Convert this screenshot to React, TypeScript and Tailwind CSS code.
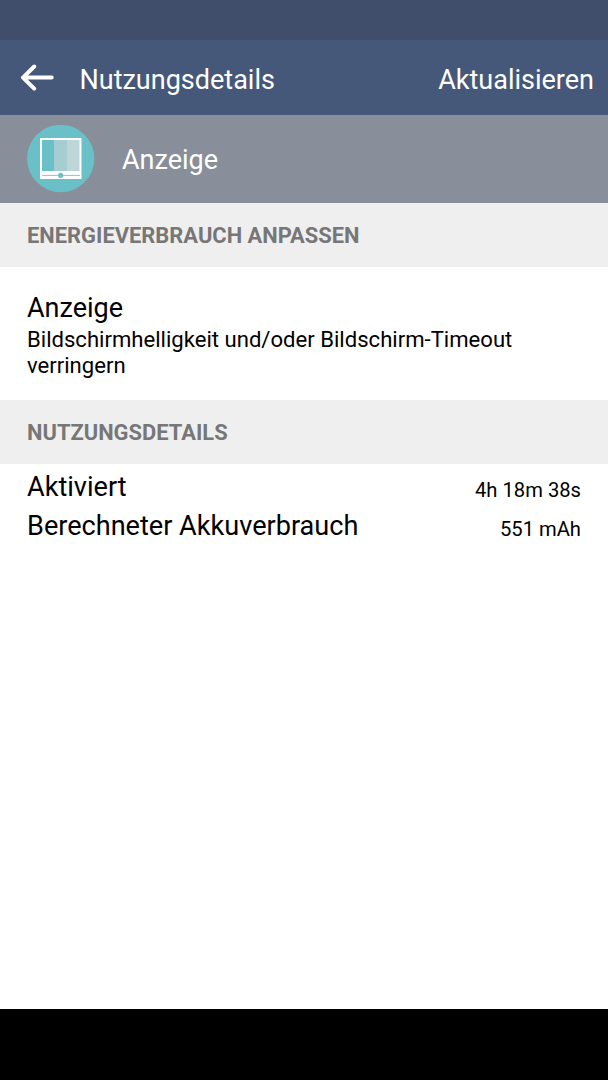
const usage = [
    { label: "Aktiviert", value: "4h 18m 38s" },
    { label: "Berechneter Akkuverbrauch", value: "551 mAh" },
];

function BackIcon() {
    return (
        <svg
            width="34"
            height="28"
            viewBox="0 0 34 28"
            fill="none"
            stroke="white"
            strokeWidth="4"
            strokeLinecap="round"
            strokeLinejoin="round"
        >
            <path d="M14.2 2.5 3 13.6l11.2 11M3 13.6h28.7" />
        </svg>
    );
}

function DisplayIcon() {
    return (
        <svg width="68" height="68" viewBox="0 0 68 68">
            <circle cx="33.7" cy="33.5" r="33.7" fill="#6ac0c7" />
            <rect x="13" y="13" width="41.5" height="41" fill="white" />
            <rect x="15" y="15" width="12.5" height="31" fill="#6ac0c7" />
            <rect x="27" y="15" width="13.5" height="31" fill="#a6ced2" />
            <rect x="40" y="15" width="12.5" height="31" fill="#bfd6d9" />
            <path d="M15 50.4h38" stroke="#85c8cd" />
            <circle cx="33.7" cy="50.3" r="2.6" fill="#6ac0c7" />
        </svg>
    );
}

function SectionHeader({ title }: { title: string }) {
    return (
        <h2 className="h-16 bg-[#efefef] px-[27px] text-[21.9px] leading-[66px] font-bold text-[#777]">
            {title}
        </h2>
    );
}

export default function App() {
    return (
        <div className="flex h-[1080px] w-[608px] flex-col bg-white font-['Roboto',sans-serif] text-black">
            <div className="h-10 bg-[#404e6c]" />
            <header className="flex h-[75px] items-center bg-[#465879] pl-5 pr-3.5 text-[27px] text-white">
                <BackIcon />
                <h1 className="ml-[25.5px] pt-[5px]">Nutzungsdetails</h1>
                <button className="ml-auto pt-[5px]">Aktualisieren</button>
            </header>
            <div className="flex h-[88px] items-center gap-[27px] bg-[#888e9a] px-[27px] text-[27px] text-white">
                <DisplayIcon />
                <span className="pt-[3px]">Anzeige</span>
            </div>

            <SectionHeader title="ENERGIEVERBRAUCH ANPASSEN" />
            <div className="h-[133px] px-[27px] pt-[23px]">
                <p className="text-[27px] leading-9">Anzeige</p>
                <p className="text-[22.1px] leading-[26px]">
                    Bildschirmhelligkeit und/oder Bildschirm-Timeout verringern
                </p>
            </div>

            <SectionHeader title="NUTZUNGSDETAILS" />
            <dl className="flex-1 px-[27px] pt-1">
                {usage.map((row) => (
                    <div key={row.label} className="flex h-[39px] justify-between">
                        <dt className="text-[27.1px] leading-[39px]">{row.label}</dt>
                        <dd className="pt-[3px] text-[20.2px] leading-[39px]">{row.value}</dd>
                    </div>
                ))}
            </dl>
            <div className="h-[71px] bg-black" />
        </div>
    );
}
